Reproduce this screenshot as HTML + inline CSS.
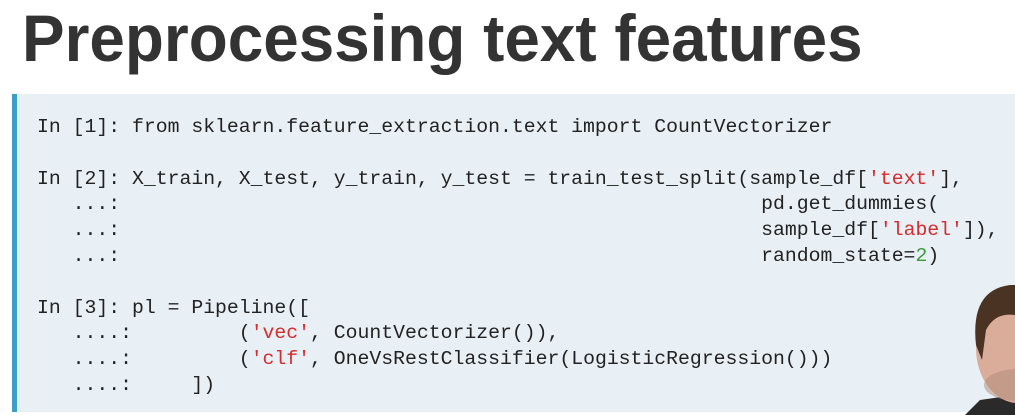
<!DOCTYPE html>
<html><head><meta charset="utf-8"><style>
html,body{margin:0;padding:0;width:1015px;height:415px;overflow:hidden;background:#fff;position:relative}
h1{position:absolute;left:22px;top:-2px;margin:0;font:bold 66px/80px "Liberation Sans",sans-serif;color:#333;white-space:nowrap;transform:scaleX(0.967);transform-origin:0 0}
.box{position:absolute;left:12px;top:94px;width:1003px;height:318px;background:#e8eff5;border-left:5px solid #3aa0c8;box-sizing:border-box}
pre{position:absolute;left:37px;top:115px;margin:0;font:19.8px/25.8px "Liberation Mono",monospace;color:#222}
.s{color:#d42c2c}.n{color:#3a9a3a}
</style></head><body>
<h1>Preprocessing text features</h1>
<div class="box"></div>
<pre>In [1]: from sklearn.feature_extraction.text import CountVectorizer

In [2]: X_train, X_test, y_train, y_test = train_test_split(sample_df[<span class="s">'text'</span>],
   ...:                                                      pd.get_dummies(
   ...:                                                      sample_df[<span class="s">'label'</span>]),
   ...:                                                      random_state=<span class="n">2</span>)

In [3]: pl = Pipeline([
   ....:         (<span class="s">'vec'</span>, CountVectorizer()),
   ....:         (<span class="s">'clf'</span>, OneVsRestClassifier(LogisticRegression()))
   ....:     ])</pre>
<svg style="position:absolute;left:940px;top:270px" width="75" height="145">
<path d="M25 145 L40 130 L75 125 L75 145 Z" fill="#2a2a2a"/>
<ellipse cx="78" cy="78" rx="42" ry="55" fill="#d9ad9a"/>
<path d="M36 75 Q30 20 70 15 L75 15 L75 45 Q55 42 46 60 L42 90 Z" fill="#4a3322"/>
<ellipse cx="78" cy="115" rx="34" ry="16" fill="#b08a78" opacity="0.5"/>
</svg>
</body></html>
